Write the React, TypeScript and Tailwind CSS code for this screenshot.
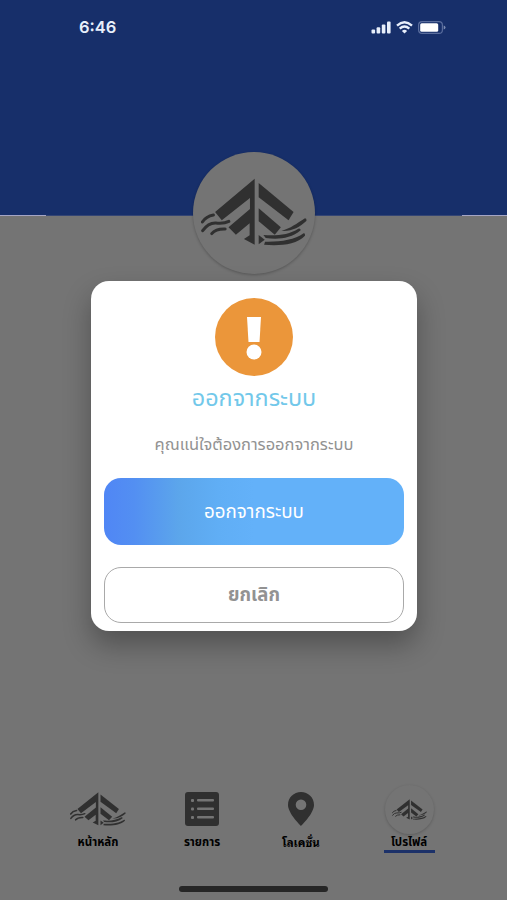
import React from "react";

const THAI = "font-['Noto_Sans_Thai','Prompt','Kanit','Noto_Sans','Liberation_Sans',sans-serif]";

function Logo({ className }: { className: string }) {
  return (
    <svg viewBox="18 20 316 204" preserveAspectRatio="none" className={className} fill="currentColor">
      <path d="M178 22V220L146 203L163 192V156L122 190L100 168L164 113V80L80 147L60 122Z" />
      <path d="M190 35L294 122L279 147L190 78Z" />
      <path d="M190 111L256 168L238 190L190 150Z" />
      <path d="M190 191L208 205L190 219Z" />
      <g fill="none" stroke="currentColor" strokeWidth="9" strokeLinecap="round">
        <path d="M22 152Q33 135 55 131" />
        <path d="M23 178Q40 154 62 155Q86 158 101 150" />
        <path d="M50 187Q62 172 90 173" />
      </g>
      <path d="M258 179C285 171 303 157 328 141Q334 142 332 149C312 167 289 181 258 179Z" />
      <path d="M204 191C245 194 280 190 308 172Q315 170 315 177C286 203 244 205 211 200Z" />
      <path d="M209 211C252 212 296 207 324 186Q329 185 328 193C302 221 249 224 206 220Z" />
    </svg>
  );
}

function StatusBar() {
  return (
    <div className="flex h-[54px] items-center justify-between pl-[79px] pr-[61px] text-[#e8effb]">
      <span className="font-['Inter',sans-serif] text-[16.5px] font-semibold leading-5">6:46</span>
      <div className="flex items-center gap-[5px]">
        <svg viewBox="0 0 20 13" className="h-[13px] w-5" fill="currentColor">
          <rect x="0.5" y="8.5" width="3.6" height="4" rx="1" />
          <rect x="5.6" y="6.3" width="3.6" height="6.2" rx="1" />
          <rect x="10.8" y="3.5" width="3.6" height="9" rx="1" />
          <rect x="16" y="0.5" width="3.6" height="12" rx="1" />
        </svg>
        <svg viewBox="0 0 17 13" className="h-[13px] w-[17px]" fill="none" stroke="currentColor" strokeWidth="2.4">
          <path d="M1 4.6Q8.500 -2 16 4.600" />
          <path d="M3.700 7.600Q8.500 3.400 13.300 7.600" />
          <path d="M8.500 12.500L5.900 9.900Q8.500 7.800 11.100 9.900Z" fill="currentColor" stroke="none" />
        </svg>
        <svg viewBox="0 0 28 13" className="h-[13px] w-7">
          <rect x="0.600" y="0.600" width="23.800" height="11.800" rx="3.500" fill="none" stroke="#5a6d9d" strokeWidth="1.200" />
          <rect x="2.200" y="2.200" width="18" height="8.600" rx="1.500" fill="#fff" />
          <path d="M25.700 4.500Q27.500 5 27.500 6.500T25.700 8.500Z" fill="#7c8bb1" />
        </svg>
      </div>
    </div>
  );
}

function Tab({ label, children, active, labelClass = "leading-[18px]" }: { label: string; children: React.ReactNode; active?: boolean; labelClass?: string }) {
  return (
    <div className="flex w-[102px] flex-col items-center">
      <div className="flex h-[50px] items-center justify-center text-[#303030]">{children}</div>
      <span className={`h-[16px] whitespace-nowrap text-[11.5px] font-bold text-black ${labelClass}`}>{label}</span>
      {active && <div className="h-[3px] w-[51px] bg-[#1c3169]" />}
    </div>
  );
}

export default function App() {
  return (
    <div className={`relative flex h-[900px] w-[507px] flex-col overflow-hidden bg-[#747474] ${THAI}`}>
      <header className="h-[215px] shrink-0 bg-[#172f6a]">
        <StatusBar />
      </header>
      <div className="flex h-px shrink-0 justify-between bg-[#344574]">
        <div className="w-[46px] bg-[#a5a5c5]" />
        <div className="w-[45px] bg-[#a5a5c5]" />
      </div>
      <div className="relative mx-auto -mt-[64px] flex size-[122px] shrink-0 items-center justify-center rounded-full bg-[#747474] pb-[2px] text-[#303030] shadow-[0_1px_3px_rgba(0,0,0,0.25)]">
        <Logo className="h-[68px] w-[106px]" />
      </div>

      <section className="relative ml-[91px] mt-[7px] flex h-[350px] w-[326px] shrink-0 flex-col items-center rounded-[18px] bg-white px-[13px] pt-[17px] shadow-[0_14px_28px_rgba(0,0,0,0.3)]">
        <svg viewBox="0 0 78 78" className="size-[78px] shrink-0">
          <circle cx="39" cy="39" r="39" fill="#eb963a" />
          <path d="M32 19H46L44.500 44H33.500Z" fill="#fff" />
          <circle cx="39" cy="54" r="7.500" fill="#fff" />
        </svg>
        <h1 className="mt-[8px] h-[30px] whitespace-nowrap text-[23.4px] leading-[30px] text-[#72c8ea]">ออกจากระบบ</h1>
        <p className="mt-[19px] h-[24px] whitespace-nowrap text-[16.5px] leading-[24px] text-[#929292]">คุณแน่ใจต้องการออกจากระบบ</p>
        <button className="mt-[21px] h-[67px] w-full shrink-0 rounded-[17px] bg-[linear-gradient(90deg,#5086f5_0%,#538ff2_10%,#5ca6eb_25%,#60aef5_38%,#63b1f9_50%)] pt-[2px] text-[18.8px] text-white">ออกจากระบบ</button>
        <button className="mt-[22px] h-[56px] w-full shrink-0 rounded-[17px] border border-[#a9a9a9] pt-[2px] text-[18.5px] font-bold text-[#929292]">ยกเลิก</button>
      </section>

      <nav className="mt-[153px] flex pl-[47px]">
        <Tab label="หน้าหลัก"><Logo className="h-[34px] w-[56px]" /></Tab>
        <div className="w-[2px]" />
        <Tab label="รายการ">
          <svg viewBox="0 0 34 34" className="size-[34px]">
            <rect width="34" height="34" rx="3" fill="currentColor" />
            <g fill="#747474">
              <rect x="6" y="7" width="3" height="3" rx="1" /><rect x="12" y="7" width="17" height="2.500" rx="1" />
              <rect x="6" y="15.500" width="3" height="3" rx="1" /><rect x="12" y="15.500" width="17" height="2.500" rx="1" />
              <rect x="6" y="24" width="3" height="3" rx="1" /><rect x="12" y="24" width="17" height="2.500" rx="1" />
            </g>
          </svg>
        </Tab>
        <div className="-ml-[3px]" />
        <Tab label="โลเคชั่น" labelClass="leading-[17px] font-['Noto_Sans_Thai_Looped','Sarabun','Loma','Garuda','Waree','Noto_Sans_Thai',sans-serif]">
          <svg viewBox="0 0 26 34" className="h-[34px] w-[26px]" fill="currentColor">
            <path fillRule="evenodd" d="M13 0C5.800 0 0 5.500 0 13C0 21.500 13 34 13 34S26 21.500 26 13C26 5.500 20.200 0 13 0ZM13 18A5.300 5.300 0 1 1 13 7.400A5.300 5.300 0 0 1 13 18Z" />
          </svg>
        </Tab>
        <div className="w-[6px]" />
        <Tab label="โปรไฟล์" active>
          <div className="flex size-[49px] shrink-0 items-center justify-center rounded-full bg-[#747474] shadow-[0_1px_3px_rgba(0,0,0,0.2)]">
            <Logo className="h-[21px] w-[35px]" />
          </div>
        </Tab>
      </nav>
      <div className="mx-auto mb-[8px] mt-auto h-[6px] w-[149px] rounded-full bg-[#262626]" />
    </div>
  );
}
